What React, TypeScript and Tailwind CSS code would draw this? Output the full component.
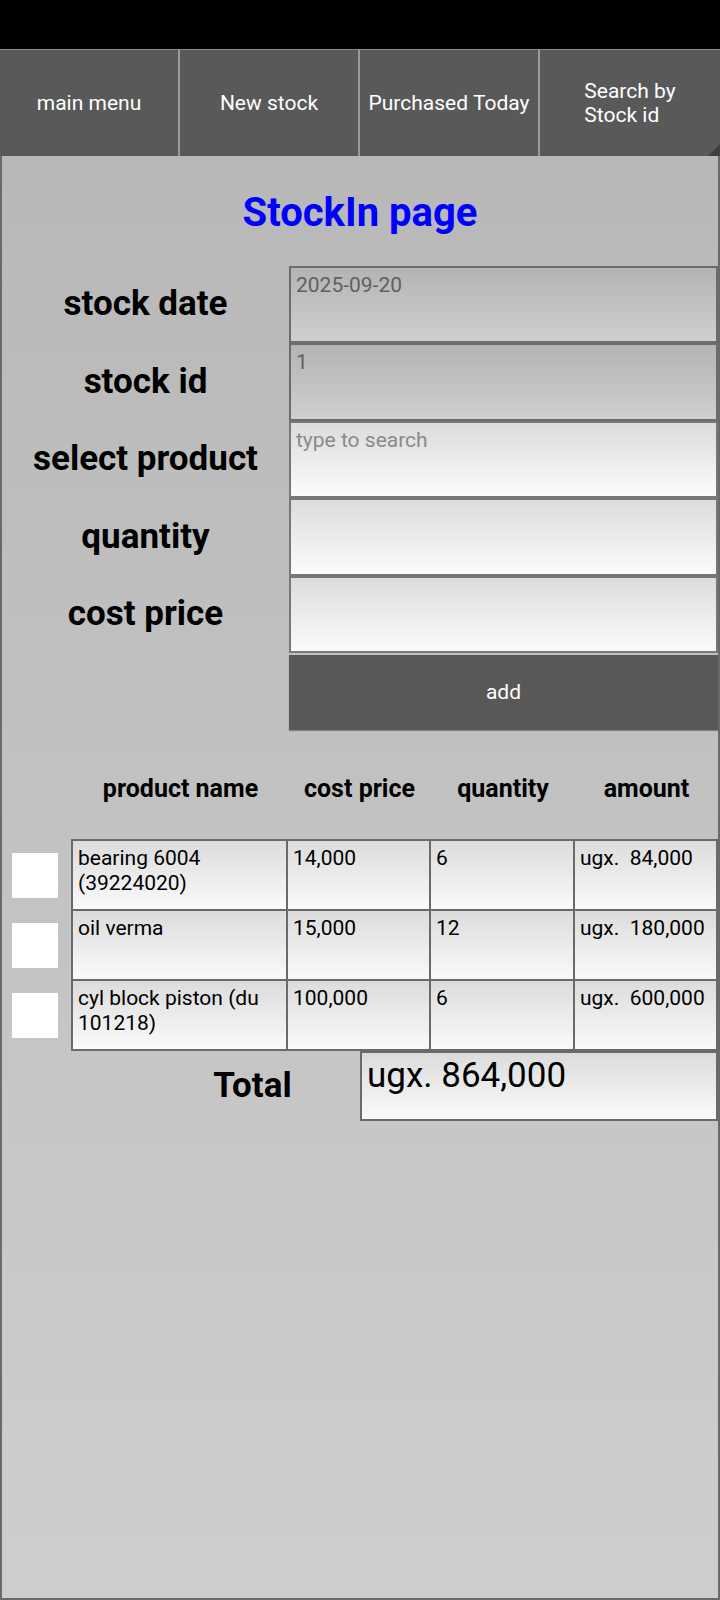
import React from "react";

const rows = [
  { name: "bearing 6004 (39224020)", cost: "14,000", qty: "6", amount: "ugx.  84,000" },
  { name: "oil verma", cost: "15,000", qty: "12", amount: "ugx.  180,000" },
  { name: "cyl block piston (du 101218)", cost: "100,000", qty: "6", amount: "ugx.  600,000" },
];

const fields = [
  { label: "stock date", value: "2025-09-20", kind: "disabled" },
  { label: "stock id", value: "1", kind: "disabled" },
  { label: "select product", value: "type to search", kind: "placeholder" },
  { label: "quantity", value: "", kind: "empty" },
  { label: "cost price", value: "", kind: "empty" },
];

export default function App() {
  return (
    <div
      className="w-[720px] h-[1600px] flex flex-col bg-black overflow-hidden"
      style={{ fontFamily: "Roboto, 'Noto Sans', sans-serif" }}
    >
      <div className="h-[49px] bg-black shrink-0" />
      <div className="relative h-[107px] shrink-0 grid grid-cols-4 bg-[#595959] border-t border-[#8a8a8a]">
        {["main menu", "New stock", "Purchased Today"].map((t) => (
          <div
            key={t}
            className="flex items-center justify-center text-center text-[21px] leading-[24px] text-white border-r-2 border-[#9a9a9a]"
          >
            {t}
          </div>
        ))}
        <div className="flex items-center justify-center text-[21px] leading-[24px] text-white">
          <div className="text-left">
            Search by
            <br />
            Stock id
          </div>
        </div>
        <div className="absolute right-0 bottom-0 w-0 h-0 border-l-[12px] border-l-transparent border-b-[12px] border-b-[#3e3e3e]" />
      </div>
      <div className="flex-1 flex flex-col bg-gradient-to-b from-[#b8b8b8] to-[#cecece] border-x-2 border-b-2 border-[#6a6a6a]">
        <h1 className="mt-[33px] text-center text-[40px] leading-[48px] font-bold text-[#0000ff]">
          StockIn page
        </h1>
        <div className="mt-[29px] grid grid-cols-[287px_1fr]">
          {fields.map((f) => (
            <React.Fragment key={f.label}>
              <div className="h-[77.4px] flex items-center justify-center text-[35px] font-bold text-black">
                {f.label}
              </div>
              <div
                className={`h-[77.4px] border-2 px-[5px] pt-[4px] text-[21px] leading-[26px] ${
                  f.kind === "disabled"
                    ? "border-[#6c6c6c] bg-gradient-to-b from-[#b4b4b4] to-[#cfcfcf] text-[#606060]"
                    : "border-[#777777] bg-gradient-to-b from-[#dcdcdc] to-[#fbfbfb] text-[#8a8a8a]"
                }`}
              >
                {f.value}
              </div>
            </React.Fragment>
          ))}
          <div />
          <div className="h-[75px] mt-[2px] bg-[#585858] flex items-center justify-center text-white text-[21px] shadow-[0_1px_1px_rgba(0,0,0,0.3)]">
            add
          </div>
        </div>
        <div className="mt-[40px] grid grid-cols-[71px_215px_143px_144px_1fr] h-[32px] items-center text-[25px] font-bold text-black">
          <div />
          <div className="text-center">product name</div>
          <div className="text-center">cost price</div>
          <div className="text-center">quantity</div>
          <div className="text-center">amount</div>
        </div>
        <div className="mt-[39px] flex flex-col">
          {rows.map((r) => (
            <div key={r.name} className="grid grid-cols-[71px_215px_143px_144px_1fr] h-[70px]">
              <div className="flex items-center pl-[10px]">
                <div className="w-[46px] h-[45px] bg-white" />
              </div>
              {[r.name, r.cost, r.qty, r.amount].map((c, j) => (
                <div
                  key={j}
                  className="border-2 border-[#6a6a6a] -mt-[2px] -ml-[2px] bg-gradient-to-b from-[#dcdcdc] to-[#fafafa] px-[5px] pt-[5px] text-[21px] leading-[25px] text-black whitespace-pre-wrap"
                >
                  {c}
                </div>
              ))}
            </div>
          ))}
        </div>
        <div className="grid grid-cols-[143px_215px_1fr] h-[70px]">
          <div />
          <div className="flex items-center justify-center text-[35px] font-bold text-black">Total</div>
          <div className="border-2 border-[#6a6a6a] bg-gradient-to-b from-[#dcdcdc] to-[#fafafa] px-[5px] pt-[2px] text-[35px] leading-[42px] text-black">
            ugx. 864,000
          </div>
        </div>
      </div>
    </div>
  );
}
